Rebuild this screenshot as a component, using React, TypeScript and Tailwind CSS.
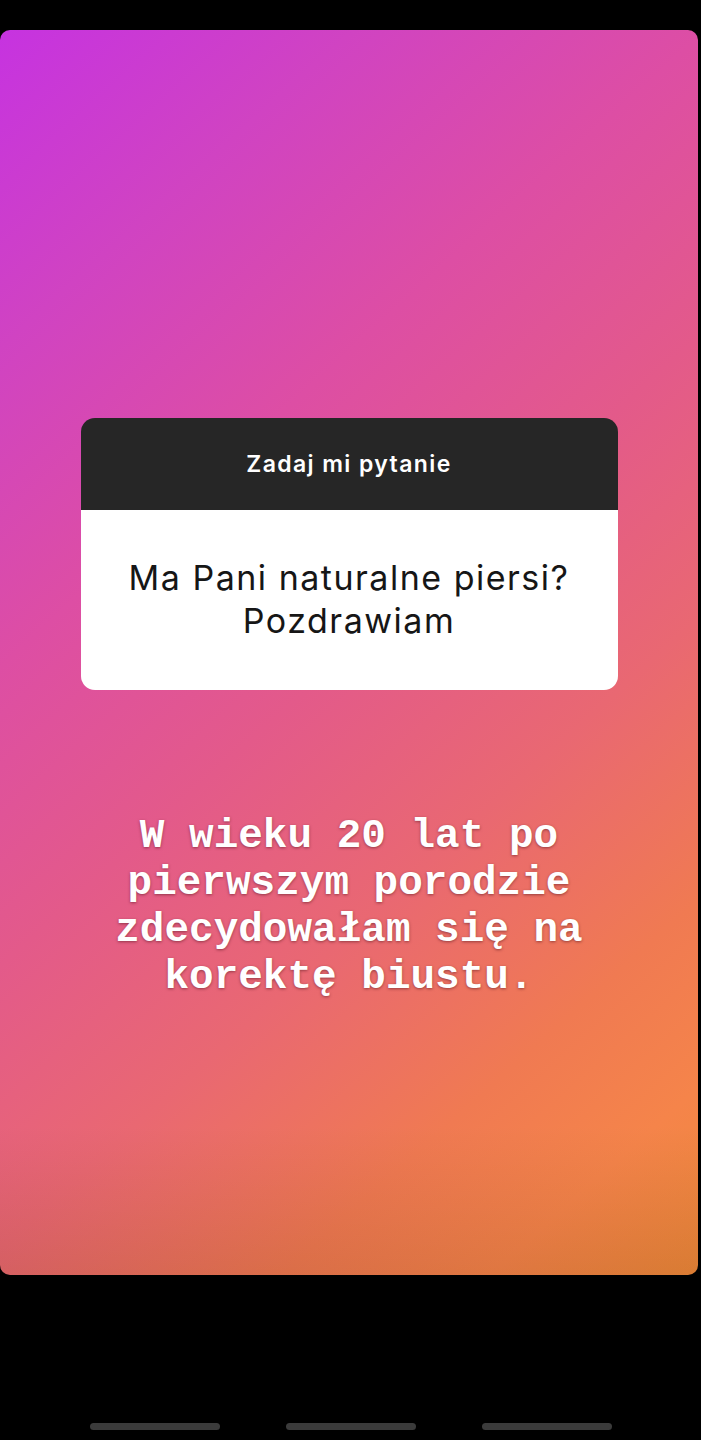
import React from 'react';

const story = {
  prompt: 'Zadaj mi pytanie',
  question: ['Ma Pani naturalne piersi?', 'Pozdrawiam'],
  answer: ['W wieku 20 lat po', 'pierwszym porodzie', 'zdecydowałam się na', 'korektę biustu.'],
};

const App: React.FC = () => {
  return (
    <div className="min-h-[1440px] w-full bg-black pt-[30px] flex flex-col">
      {/* Story */}
      <div className="relative mr-[3px] h-[1245px] rounded-[10px] overflow-hidden bg-[linear-gradient(138deg,#c633e0_0%,#d043c2_17%,#dd4ea4_34%,#e35a8a_50%,#e96872_65%,#f07a52_80%,#f5844a_90%,#ef8a3a_100%)]">
        {/* bottom shade */}
        <div className="absolute inset-x-0 bottom-0 h-[150px] bg-[linear-gradient(to_bottom,rgba(0,0,0,0),rgba(60,20,0,0.12))]" />

        <div className="relative flex flex-col items-center pt-[388px]">
          {/* Question sticker */}
          <div className="w-[537px] rounded-[14px] overflow-hidden font-['Inter',sans-serif]">
            <div className="h-[92px] bg-[#262626] flex items-center justify-center">
              <span className="text-white text-[23px] font-semibold tracking-[1.4px]">{story.prompt}</span>
            </div>
            <div className="h-[180px] bg-white flex flex-col items-center justify-center pb-[2px]">
              {story.question.map((line) => (
                <p key={line} className="text-[#161616] text-[34px] leading-[43px] tracking-[1.5px]">
                  {line}
                </p>
              ))}
            </div>
          </div>

          {/* Answer text */}
          <div className="mt-[123px] text-center font-['Liberation_Mono',monospace] font-bold text-white text-[41px] leading-[47px] [text-shadow:0_1px_3px_rgba(80,20,30,0.55)]">
            {story.answer.map((line) => (
              <p key={line}>{line}</p>
            ))}
          </div>
        </div>
      </div>

      {/* Page indicators */}
      <div className="mt-[148px] flex justify-center gap-[66px] pl-[1px]">
        <div className="w-[130px] h-[7px] rounded-full bg-[#3b3b3b]" />
        <div className="w-[130px] h-[7px] rounded-full bg-[#3b3b3b]" />
        <div className="w-[130px] h-[7px] rounded-full bg-[#3b3b3b]" />
      </div>
    </div>
  );
};

export default App;
